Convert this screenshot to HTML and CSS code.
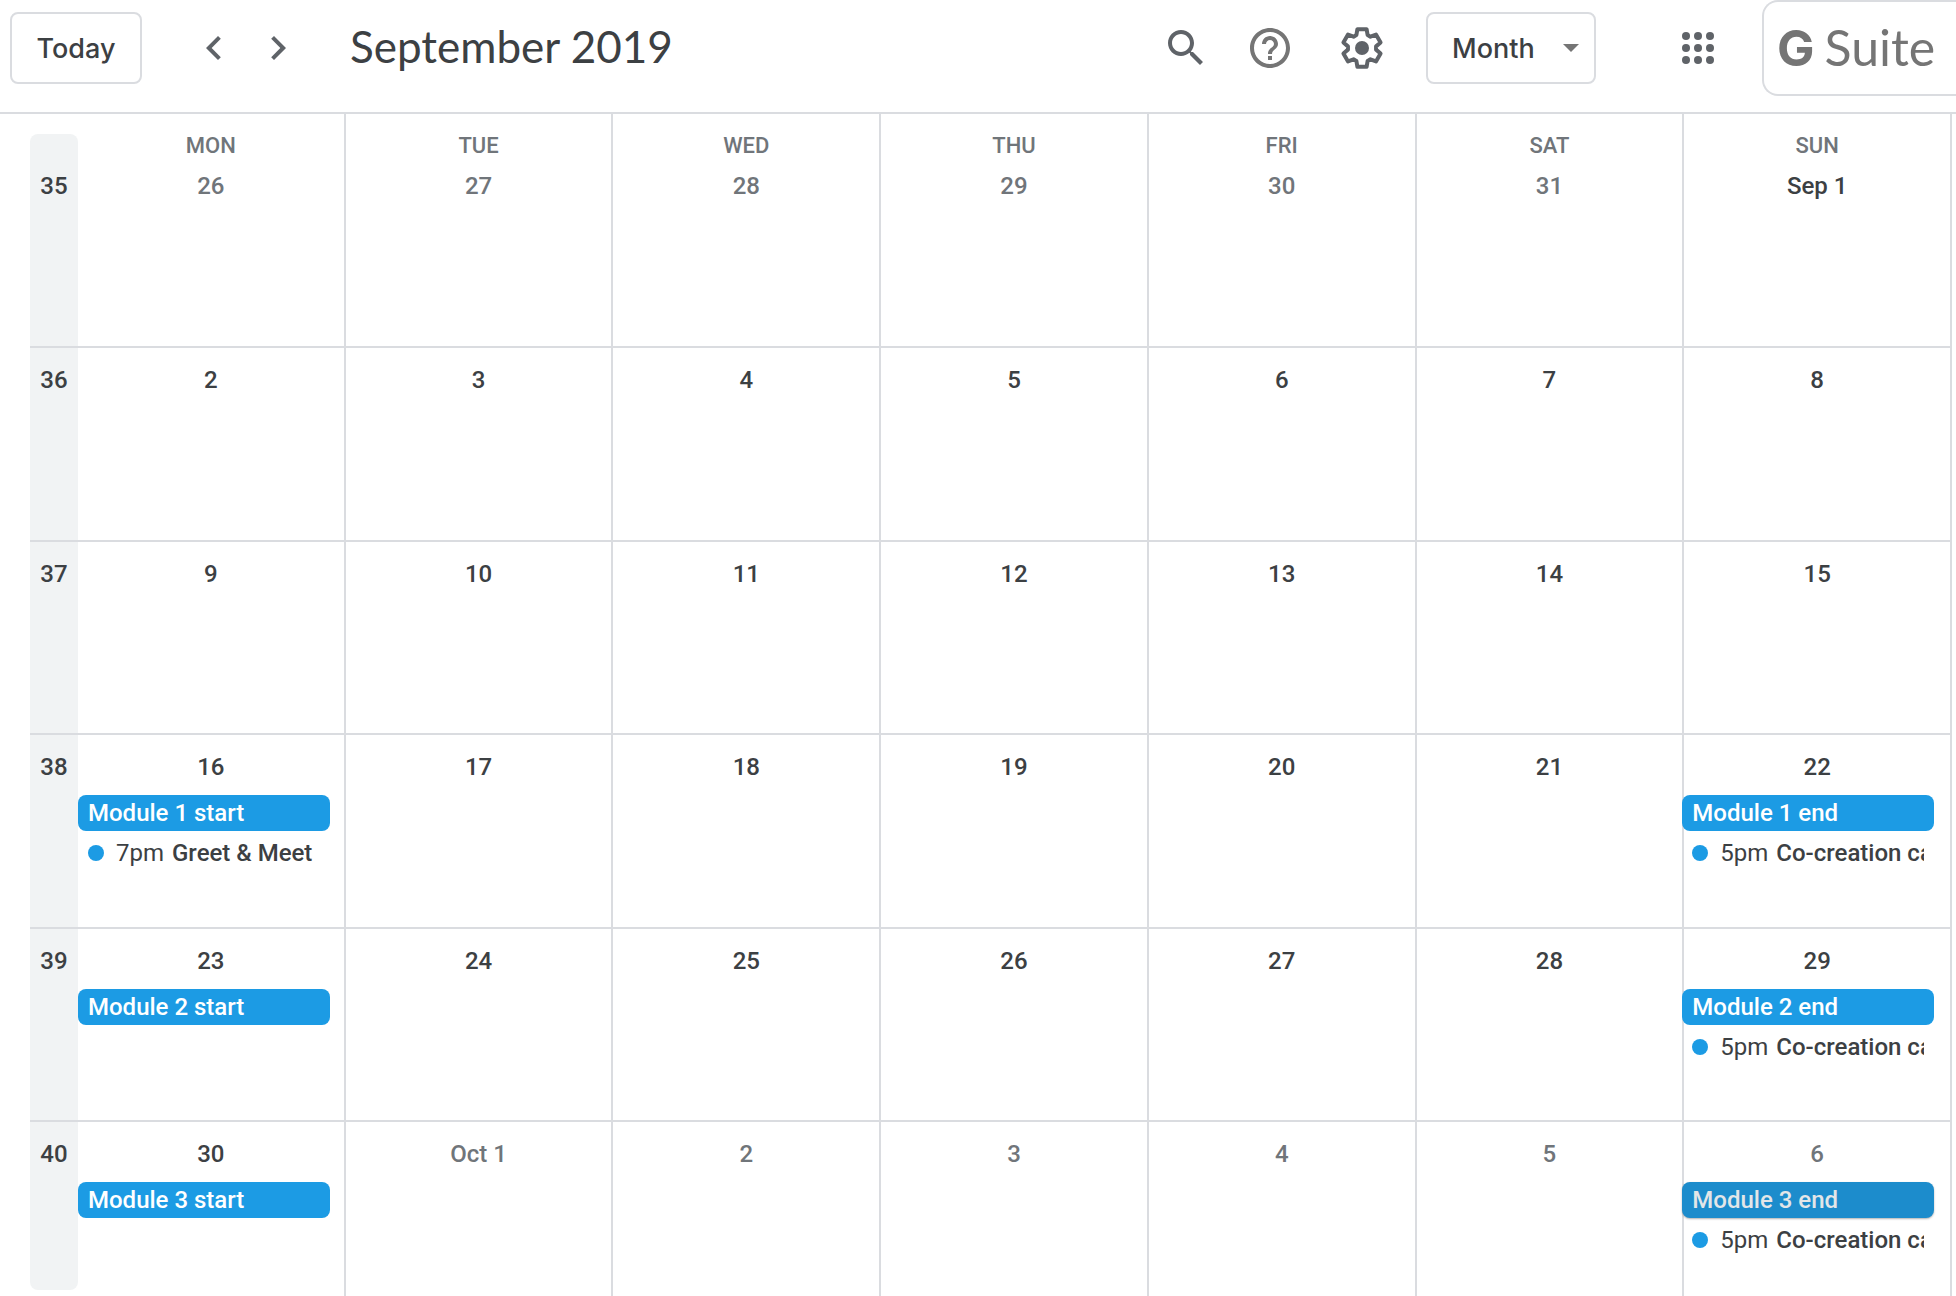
FILE: index.html
```html
<!DOCTYPE html>
<html lang="en">
<head>
<meta charset="utf-8">
<title>Calendar - September 2019</title>
<link rel="stylesheet" href="styles.css">
</head>
<body>
<header class="topbar">
  <button class="today" type="button">Today</button>
  <nav class="pager">
    <button class="icon-button" type="button" aria-label="Previous month"><svg viewBox="0 0 24 24"><path d="M15.41 7.41 14 6l-6 6 6 6 1.41-1.41L10.83 12z"/></svg></button>
    <button class="icon-button" type="button" aria-label="Next month"><svg viewBox="0 0 24 24"><path d="M10 6 8.59 7.41 13.17 12l-4.58 4.59L10 18l6-6z"/></svg></button>
  </nav>
  <h1 class="title">September 2019</h1>
  <div class="tools">
    <button class="icon-button search" type="button" aria-label="Search"><svg viewBox="0 0 24 24"><path d="M15.5 14h-.79l-.28-.27C15.41 12.59 16 11.11 16 9.5 16 5.91 13.09 3 9.5 3S3 5.91 3 9.5 5.91 16 9.5 16c1.61 0 3.09-.59 4.23-1.57l.27.28v.79l5 4.99L20.49 19l-4.99-5zm-6 0C7.01 14 5 11.99 5 9.5S7.01 5 9.5 5 14 7.01 14 9.5 11.99 14 9.5 14z"/></svg></button>
    <button class="icon-button help" type="button" aria-label="Help"><svg viewBox="0 0 24 24"><path d="M11 18h2v-2h-2v2zm1-16C6.48 2 2 6.48 2 12s4.48 10 10 10 10-4.48 10-10S17.52 2 12 2zm0 18c-4.41 0-8-3.59-8-8s3.59-8 8-8 8 3.59 8 8-3.59 8-8 8zm0-14c-2.21 0-4 1.79-4 4h2c0-1.1.9-2 2-2s2 .9 2 2c0 2-3 1.75-3 5h2c0-2.25 3-2.5 3-5 0-2.21-1.79-4-4-4z"/></svg></button>
    <button class="icon-button settings" type="button" aria-label="Settings"><svg viewBox="-24 -24 48 48"><path class="gear-rim" d="M-4.6-18.8 4.6-18.8 5.6-13 8.46-11.35 13.98-13.38 18.58-5.42 14.06-1.65 14.06 1.65 18.58 5.42 13.98 13.38 8.46 11.35 5.6 13 4.6 18.8-4.6 18.8-5.6 13-8.46 11.35-13.98 13.38-18.58 5.42-14.06 1.65-14.06-1.65-18.58-5.42-13.98-13.38-8.46-11.35-5.6-13z"/><circle r="7"/></svg></button>
    <div class="view">
      <select class="view-select" aria-label="View">
        <option>Day</option>
        <option>Week</option>
        <option selected>Month</option>
        <option>Year</option>
      </select>
      <svg class="view-arrow" viewBox="0 0 16 8"><path d="M0 0h16L8 8z"/></svg>
    </div>
    <button class="icon-button apps" type="button" aria-label="Apps"><svg viewBox="0 0 48 48"><circle cx="12" cy="12" r="4"/><circle cx="24" cy="12" r="4"/><circle cx="36" cy="12" r="4"/><circle cx="12" cy="24" r="4"/><circle cx="24" cy="24" r="4"/><circle cx="36" cy="24" r="4"/><circle cx="12" cy="36" r="4"/><circle cx="24" cy="36" r="4"/><circle cx="36" cy="36" r="4"/></svg></button>
    <a class="suite" href="#"><b class="suite-g">G</b><span>Suite</span></a>
  </div>
</header>
<main class="month">
  <table class="grid">
    <thead>
      <tr class="row"><td class="corner"></td><th scope="col">MON</th><th scope="col">TUE</th><th scope="col">WED</th><th scope="col">THU</th><th scope="col">FRI</th><th scope="col">SAT</th><th scope="col">SUN</th></tr>
    </thead>
    <tbody>
      <tr class="row"><th scope="row">35</th><td class="other">26</td><td class="other">27</td><td class="other">28</td><td class="other">29</td><td class="other">30</td><td class="other">31</td><td>Sep 1</td></tr>
      <tr class="row"><th scope="row">36</th><td>2</td><td>3</td><td>4</td><td>5</td><td>6</td><td>7</td><td>8</td></tr>
      <tr class="row"><th scope="row">37</th><td>9</td><td>10</td><td>11</td><td>12</td><td>13</td><td>14</td><td>15</td></tr>
      <tr class="row"><th scope="row">38</th><td>16
          <a class="event" href="#">Module 1 start</a>
          <a class="timed" href="#"><span class="time">7pm</span><b>Greet &amp; Meet</b></a></td><td>17</td><td>18</td><td>19</td><td>20</td><td>21</td><td>22
          <a class="event" href="#">Module 1 end</a>
          <a class="timed" href="#"><span class="time">5pm</span><b>Co-creation call</b></a></td></tr>
      <tr class="row"><th scope="row">39</th><td>23
          <a class="event" href="#">Module 2 start</a></td><td>24</td><td>25</td><td>26</td><td>27</td><td>28</td><td>29
          <a class="event" href="#">Module 2 end</a>
          <a class="timed" href="#"><span class="time">5pm</span><b>Co-creation call</b></a></td></tr>
      <tr class="row"><th scope="row">40</th><td>30
          <a class="event" href="#">Module 3 start</a></td><td class="other">Oct 1</td><td class="other">2</td><td class="other">3</td><td class="other">4</td><td class="other">5</td><td class="other">6
          <a class="event pressed" href="#">Module 3 end</a>
          <a class="timed" href="#"><span class="time">5pm</span><b>Co-creation call</b></a></td></tr>
    </tbody>
  </table>
</main>
</body>
</html>
```
FILE: styles.css
```css
* {
  box-sizing: border-box;
}

:root {
  --line: #dadce0;
  --text: #3c4043;
  --muted: #70757a;
  --icon: #5f6368;
  --blue: #1c9be4;
}

body {
  display: flex;
  flex-direction: column;
  min-height: 100vh;
  margin: 0;
  background: #fff;
  color: var(--text);
  font-family: Roboto, sans-serif;
}

a {
  color: inherit;
  text-decoration: none;
}

button {
  padding: 0;
  border: 0;
  background: none;
  cursor: pointer;
}

/* Top bar */
.topbar {
  display: flex;
  align-items: center;
  padding: 0 0 16px 10px;
  border-bottom: 2px solid var(--line);
}

.today,
.view-select {
  height: 72px;
  border: 2px solid var(--line);
  border-radius: 8px;
  background: #fff;
  color: var(--text);
  font: 500 27px Inter, sans-serif;
}

.today {
  width: 132px;
}

.pager {
  display: flex;
  gap: 16px;
  margin: 0 48px 0 48px;
}

.icon-button {
  width: 48px;
  height: 48px;
}

.icon-button svg {
  display: block;
  width: 48px;
  height: 48px;
  fill: var(--icon);
}

.title {
  margin: 0;
  padding-bottom: 4px;
  font: 400 44px/56px Lato, sans-serif;
  white-space: nowrap;
}

.tools {
  display: flex;
  align-items: center;
  margin-left: auto;
}

.search {
  margin-right: 36px;
}

.help {
  margin-right: 44px;
}

.help svg {
  fill: #757575;
}

.gear-rim {
  fill: none;
  stroke: var(--icon);
  stroke-width: 4;
  stroke-linejoin: round;
}

.view {
  display: grid;
  align-items: center;
  margin: 0 78px 0 40px;
}

.view > * {
  grid-area: 1 / 1;
}

.view-select {
  width: 170px;
  padding: 0 24px;
  appearance: none;
}

.view-arrow {
  justify-self: end;
  width: 16px;
  height: 8px;
  margin-right: 17px;
  fill: #757575;
  pointer-events: none;
}

.suite {
  display: flex;
  align-items: baseline;
  gap: 10px;
  width: 194px;
  height: 96px;
  margin-left: 40px;
  padding: 15px 0 0 13px;
  border: 2px solid var(--line);
  border-right: 0;
  border-radius: 16px 0 0 16px;
  color: #757575;
  font: 400 50px/60px Lato, sans-serif;
}

.suite-g {
  font-family: Inter, sans-serif;
  font-weight: 700;
}

/* Month grid */
.month {
  display: flex;
  flex: 1;
  padding: 0 4px 0 30px;
}

.grid {
  display: flex;
  flex: 1;
  flex-direction: column;
}

thead,
tbody {
  display: grid;
}

tbody {
  flex: 1;
  grid-template-rows: 194px repeat(4, minmax(160px, 1fr)) 174px;
}

.row {
  display: grid;
  grid-template-columns: 48px repeat(7, minmax(0, 1fr));
}

tbody .row:not(:last-child) {
  border-bottom: 2px solid var(--line);
}

th,
td {
  padding: 0;
  border-right: 2px solid var(--line);
  text-align: center;
}

.row > :first-child {
  border-right: 0;
  background: #f1f3f4;
}

.corner {
  margin-top: 20px;
  border-radius: 8px 8px 0 0;
}

thead th {
  height: 40px;
  padding-top: 24px;
  color: var(--muted);
  font: 500 22px/16px Roboto, sans-serif;
}

tbody th,
tbody td {
  padding-top: 18px;
  font: 500 24px/28px Roboto, sans-serif;
}

tbody .row:last-child th {
  margin-bottom: 6px;
  border-radius: 0 0 8px 8px;
}

tbody .other {
  color: var(--muted);
}

/* Events */
.event,
.timed {
  height: 36px;
  margin-right: 14px;
  padding: 0 10px;
  line-height: 36px;
  text-align: left;
  white-space: nowrap;
}

td + td .event,
td + td .timed {
  margin-right: 16px;
  margin-left: -2px;
}

.event {
  display: block;
  position: relative;
  margin-top: 14px;
  border-radius: 8px;
  background: var(--blue);
  color: #fff;
}

.pressed {
  background: #1c8ccc;
  color: #e3e6e8;
  box-shadow: 0 1px 2px rgba(60, 64, 67, 0.4);
}

.timed {
  display: flex;
  align-items: center;
  margin-top: 4px;
  color: var(--text);
}

.timed::before {
  content: "";
  flex: none;
  width: 16px;
  height: 16px;
  margin-right: 12px;
  border-radius: 50%;
  background: var(--blue);
}

.time {
  margin-right: 8px;
  font-weight: 400;
}

.timed b {
  flex: 1;
  min-width: 0;
  overflow: hidden;
  font-weight: 500;
}
```
